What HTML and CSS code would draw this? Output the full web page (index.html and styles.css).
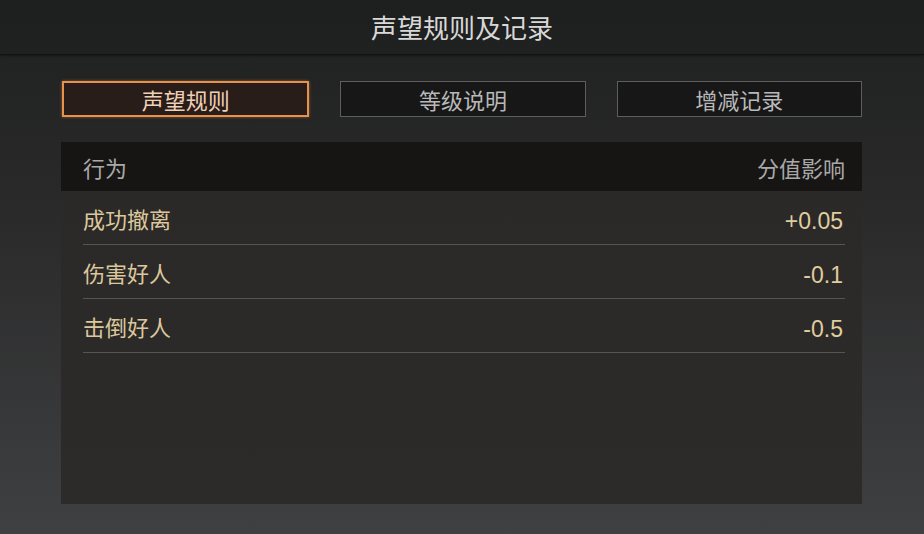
FILE: index.html
```html
<!DOCTYPE html>
<html lang="zh-CN">
<head>
  <meta charset="UTF-8" />
  <meta name="viewport" content="width=device-width, initial-scale=1.0"/>
  <title>声望规则及记录</title>
  <link rel="stylesheet" href="styles.css">
</head>
<body>

  <div class="top-bar">
    <h1>声望规则及记录</h1>
  </div>

  <div class="content">
    <div class="tabs">
      <div class="tab active">声望规则</div>
      <div class="tab">等级说明</div>
      <div class="tab">增减记录</div>
    </div>

    <div class="rules">
      <div class="rules-head">
        <span>行为</span>
        <span>分值影响</span>
      </div>
      <ul class="rules-list">
        <li><span>成功撤离</span><span class="score">+0.05</span></li>
        <li><span>伤害好人</span><span class="score">-0.1</span></li>
        <li><span>击倒好人</span><span class="score">-0.5</span></li>
      </ul>
    </div>
  </div>

</body>
</html>
```

FILE: styles.css
```css
html, body {
  margin: 0;
  height: 100%;
}
body {
  font-family: "Noto Sans CJK SC", "Noto Sans", sans-serif;
  background: linear-gradient(180deg, #1f2020 0%, #2a2a2b 40%, #3f4041 100%);
  overflow: hidden;
}
.top-bar {
  height: 54px;
  background: linear-gradient(180deg, #1d1e1e, #202121);
  border-bottom: 1px solid #121212;
  box-shadow: 0 1px 2px rgba(0,0,0,0.35);
}
.top-bar h1 {
  margin: 0;
  text-align: center;
  font-size: 26px;
  font-weight: normal;
  line-height: 54px;
  color: #d8d8d8;
}
.content {
  width: 801px;
  margin: 26px 0 0 61px;
}
.tabs {
  display: flex;
  gap: 31px;
  padding-left: 1px;
}
.tab {
  flex: 1;
  height: 34px;
  line-height: 34px;
  text-align: center;
  font-size: 22px;
  color: #b8b8b8;
  background: #171717;
  border: 1px solid #5e5e5e;
}
.tab.active {
  height: 32px;
  line-height: 32px;
  color: #f0d0b6;
  background: #281d18;
  border: 2px solid #e8914a;
  box-shadow: 0 0 3px rgba(232,145,74,0.5);
}
.rules {
  margin-top: 25px;
  height: 362px;
  background: linear-gradient(180deg, #2a2927, #2c2b29);
}
.rules-head {
  height: 49px;
  display: flex;
  justify-content: space-between;
  align-items: center;
  padding: 0 17px 0 22px;
  background: #161514;
  font-size: 22px;
  color: #a9a9a9;
}
.rules-list {
  list-style: none;
  margin: 0 17px 0 22px;
  padding: 0;
}
.rules-list li {
  height: 53px;
  display: flex;
  justify-content: space-between;
  align-items: center;
  border-bottom: 1px solid #57554f;
  font-size: 22px;
  color: #dcc79d;
}
.score {
  font-family: "Liberation Sans", Arial, sans-serif;
  font-size: 23px;
  padding: 7px 2px 0 0;
  color: #e0cd9f;
}
```
